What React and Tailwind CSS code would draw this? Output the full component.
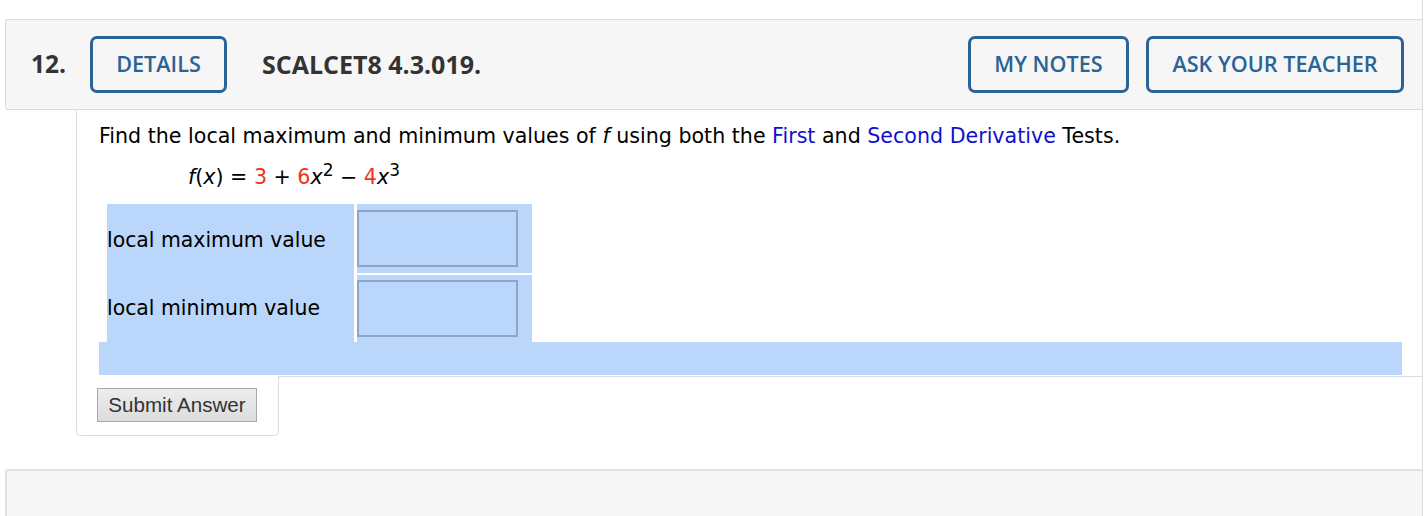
export default function App() {
  const btn =
    "h-[57px] flex items-center justify-center border-[3px] border-[#2b6396] rounded-[7px] text-[#2b6396] text-[21.6px] font-semibold";
  return (
    <div
      className="w-[1423px] h-[516px] overflow-hidden bg-white border-r border-[#dcdcdc] pt-[19px] pl-[5px] flex flex-col"
      style={{ fontFamily: '"Open Sans", sans-serif' }}
    >
      {/* Header */}
      <div className="h-[91px] shrink-0 bg-[#f6f6f6] border border-r-0 border-[#dcdcdc] rounded-l-[3px] flex items-center pl-[25px] pr-[18px]">
        <span className="text-[24.5px] font-bold text-[#333] w-[59px]">12.</span>
        <div className={btn + " w-[137px]"}>DETAILS</div>
        <span className="ml-[35px] text-[25px] font-bold text-[#333]">SCALCET8 4.3.019.</span>
        <div className="flex-1" />
        <div className={btn + " w-[161px]"}>MY NOTES</div>
        <div className={btn + " w-[258px] ml-[17px]"}>ASK YOUR TEACHER</div>
      </div>

      {/* Question content */}
      <div
        className="ml-[71px] h-[266px] shrink-0 border-l border-[#dcdcdc] flex flex-col"
        style={{ fontFamily: '"DejaVu Sans", Verdana, sans-serif' }}
      >
        <p className="pl-[22px] pt-[12px] text-[20.6px] leading-[28px] text-black">
          Find the local maximum and minimum values of <i>f</i> using both the{" "}
          <span className="text-[#1010cc]">First</span> and{" "}
          <span className="text-[#1010cc]">Second Derivative</span> Tests.
        </p>
        <p className="pl-[111px] pt-[13px] text-[20.6px] leading-[28px] text-black">
          <i>f</i>(<i>x</i>) = <span className="text-[#ee3323]">3</span> +{" "}
          <span className="text-[#ee3323]">6</span>
          <i>x</i>
          <sup className="text-[17px]">2</sup> − <span className="text-[#ee3323]">4</span>
          <i>x</i>
          <sup className="text-[17px]">3</sup>
        </p>

        {/* Answer table */}
        <div className="mt-[13px] ml-[30px] flex">
          <div className="w-[247px] bg-[#bad6fa] flex flex-col">
            <div className="h-[69px] flex items-center text-[20.4px] pt-[4px]">local maximum value</div>
            <div className="h-[69px] flex items-center text-[20.4px] pt-[2px]">local minimum value</div>
          </div>
          <div className="ml-[3px] flex flex-col">
            <div className="h-[69px] w-[175px] bg-[#bad6fa] pt-[6px]">
              <div className="w-[161px] h-[57px] border-2 border-[#8ca6c9] bg-[#bad6fa]" />
            </div>
            <div className="mt-[2px] h-[67px] w-[175px] bg-[#bad6fa] pt-[5px]">
              <div className="w-[161px] h-[57px] border-2 border-[#8ca6c9] bg-[#bad6fa]" />
            </div>
          </div>
        </div>
        <div className="ml-[22px] w-[1303px] h-[33px] bg-[#bad6fa]" />
      </div>

      {/* Submit row */}
      <div className="ml-[71px] flex items-start shrink-0">
        <div className="w-[203px] h-[60px] border-l border-r border-b border-[#dcdcdc] rounded-b-[5px] pl-[20px] pt-[12px]">
          <button
            className="w-[160px] h-[34px] border border-[#a9a9a9] bg-gradient-to-b from-[#ededed] to-[#dcdcdc] text-[#333] text-[20.6px] flex items-center justify-center"
            style={{ fontFamily: '"Liberation Sans", Arial, sans-serif' }}
          >
            Submit Answer
          </button>
        </div>
        <div className="flex-1 border-t border-[#dcdcdc]" />
      </div>

      {/* Next question panel */}
      <div className="mt-[33px] flex-1 bg-[#f6f6f6] border-t-2 border-l-2 border-[#e2e2e2] rounded-tl-[3px]" />
    </div>
  );
}
